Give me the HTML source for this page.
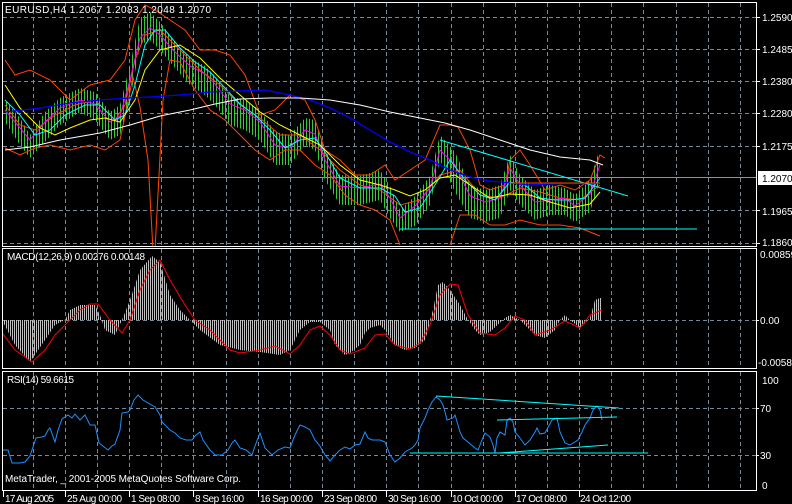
<!DOCTYPE html>
<html><head><meta charset="utf-8"><style>
html,body{margin:0;padding:0;background:#000;width:792px;height:504px;overflow:hidden}
svg{display:block}
text{font-family:"Liberation Sans",sans-serif;font-size:10px;fill:#fff}
</style></head><body>
<svg width="792" height="504" viewBox="0 0 792 504" xmlns="http://www.w3.org/2000/svg">
<defs>
<pattern id="vg" width="3" height="4" patternUnits="userSpaceOnUse"><rect x="0" y="0" width="1" height="4" fill="#32cd32"/></pattern>
<pattern id="vh" width="2" height="4" patternUnits="userSpaceOnUse"><rect x="0" y="0" width="1" height="4" fill="#c0c0c0"/></pattern>
<clipPath id="c1"><rect x="3" y="3" width="753" height="243"/></clipPath>
<clipPath id="c2"><rect x="3" y="249" width="753" height="119"/></clipPath>
<clipPath id="c3"><rect x="3" y="372" width="753" height="118"/></clipPath>
</defs>
<rect width="792" height="504" fill="#000"/>
<g stroke="#778899" stroke-width="1" stroke-dasharray="4,3">
<path d="M33.5 3V246M65.5 3V246M97.5 3V246M129.5 3V246M161.5 3V246M193.5 3V246M226.5 3V246M258.5 3V246M290.5 3V246M322.5 3V246M354.5 3V246M386.5 3V246M418.5 3V246M451.5 3V246M483.5 3V246M515.5 3V246M547.5 3V246M579.5 3V246M611.5 3V246M643.5 3V246M676.5 3V246M708.5 3V246M740.5 3V246"/>
<path d="M33.5 249V368M65.5 249V368M97.5 249V368M129.5 249V368M161.5 249V368M193.5 249V368M226.5 249V368M258.5 249V368M290.5 249V368M322.5 249V368M354.5 249V368M386.5 249V368M418.5 249V368M451.5 249V368M483.5 249V368M515.5 249V368M547.5 249V368M579.5 249V368M611.5 249V368M643.5 249V368M676.5 249V368M708.5 249V368M740.5 249V368"/>
<path d="M33.5 372V490M65.5 372V490M97.5 372V490M129.5 372V490M161.5 372V490M193.5 372V490M226.5 372V490M258.5 372V490M290.5 372V490M322.5 372V490M354.5 372V490M386.5 372V490M418.5 372V490M451.5 372V490M483.5 372V490M515.5 372V490M547.5 372V490M579.5 372V490M611.5 372V490M643.5 372V490M676.5 372V490M708.5 372V490M740.5 372V490"/>
<path d="M3 17.5H756M3 49.5H756M3 81.5H756M3 113.5H756M3 146.5H756M3 210.5H756M3 243.5H756"/>
<path d="M3 320.5H756M3 408.5H756M3 455.5H756"/>
</g>
<line x1="3" y1="177.5" x2="756" y2="177.5" stroke="#8a96a3"/>
<g clip-path="url(#c1)" fill="none" stroke-width="1">
<path fill="url(#vg)" stroke="none" d="M5 100L20 118L30 135L45 112L60 98L80 88L95 92L110 112L120 105L130 65L140 18L150 12L160 22L175 42L190 58L205 66L215 76L230 96L245 100L260 110L275 132L290 135L305 118L315 120L325 150L340 175L360 176L380 170L390 186L400 210L415 196L430 176L440 135L455 152L470 185L485 190L500 185L510 155L520 175L535 190L550 185L565 188L575 195L590 180L600 148L600 180L590 212L575 222L565 215L550 215L535 220L520 205L510 190L500 218L485 222L470 218L455 192L440 160L430 205L415 226L400 232L390 218L380 200L360 205L340 205L325 180L315 150L305 145L290 165L275 165L260 140L245 130L230 125L215 105L205 95L190 85L175 68L160 50L150 40L140 45L130 100L120 135L110 140L95 120L80 112L60 125L45 142L30 158L20 145L5 122Z"/>
<path stroke="#ff4500" d="M5 60L15 75L30 70L50 80L70 100L90 85L110 80L125 60L135 20L145 5L155 10L170 20L185 30L200 50L215 50L230 55L245 75L260 115L275 110L290 95L305 100L315 120L325 150L340 160L355 175L370 175L385 165L395 180L410 170L425 160L440 125L450 125L458 127L470 150L480 185L490 190L505 185L510 160L520 150L530 165L545 190L560 185L575 190L590 180L600 155L605 158"/>
<path stroke="#ff4500" d="M5 148L20 155L35 148L50 145L70 150L90 145L105 150L120 140L133 77L140 107L148 160L153 250M155 250L163 100L170 60L180 62L195 90L210 110L225 120L240 135L255 150L270 160L285 150L300 150L315 165L330 175L345 195L360 205L375 210L390 220L400 245M450 245L460 215L475 215L490 225L505 225L520 220L540 225L560 225L580 228L590 232L600 236"/>
<path stroke="#ff4500" d="M5 105L20 125L35 130L55 115L75 105L95 100L115 120L125 105L135 60L145 35L160 30L180 50L200 70L220 85L240 105L260 118L280 135L300 135L320 150L340 170L360 185L380 190L400 205L420 200L440 175L460 170L480 195L500 198L520 188L540 192L560 198L580 200L600 185"/>
<path stroke="#ff00ff" d="M5 110L20 128L30 140L45 122L60 108L80 100L95 104L110 122L120 116L130 80L140 38L150 28L160 35L175 52L190 66L205 74L215 84L230 104L245 110L260 122L275 145L290 148L305 130L315 134L325 160L340 186L360 188L380 184L390 198L400 218L415 206L430 188L440 150L455 165L470 196L485 202L500 198L510 168L520 185L535 202L550 200L565 198L575 206L590 194L600 165"/>
<path stroke="#00ffff" d="M5 100L20 115L35 135L50 130L65 115L85 105L100 105L115 120L125 115L135 85L145 45L155 30L165 30L180 48L195 62L210 72L225 88L240 104L255 115L270 130L285 148L300 140L315 138L325 152L340 178L360 188L380 188L395 196L405 212L420 208L435 185L450 160L465 180L480 195L495 200L510 182L525 185L540 198L555 200L570 200L585 198L600 178"/>
<path stroke="#ffff00" d="M5 85L20 108L40 128L55 135L70 128L90 120L105 118L120 122L135 100L145 70L160 50L180 45L200 58L220 78L240 95L260 112L280 125L300 135L320 145L340 165L360 180L380 185L395 190L410 196L425 190L440 178L455 175L470 185L490 198L510 194L530 195L550 202L570 208L590 204L600 192"/>
<path stroke="#0000ff" stroke-width="1.3" d="M5 112L40 108L70 103L100 100L130 98L150 97L180 95L210 92L240 91L265 90L290 95L310 100L330 108L350 118L370 130L390 142L410 152L430 160L450 170L470 177L490 181L510 183L530 185L550 184L570 183L590 184L600 183"/>
<path stroke="#ffffff" d="M5 150L30 147L60 140L100 133L130 125L160 116L190 110L215 104L240 99L270 98L300 98L330 100L360 105L390 112L420 118L445 123L470 130L500 140L530 150L560 157L590 160L603 165"/>
<path stroke="#00ffff" d="M440 140L628 196M400 229L697 229"/>
<path stroke="#ff4500" d="M510 183L600 183"/>
</g>
<rect x="2.5" y="2.5" width="754" height="244" fill="none" stroke="#fff"/>
<text x="5" y="13" textLength="206">EURUSD,H4  1.2067 1.2083 1.2048 1.2070</text>
<g>
<text x="762" y="21">1.2590</text><text x="762" y="53">1.2485</text><text x="762" y="85">1.2380</text><text x="762" y="117">1.2280</text><text x="762" y="150">1.2175</text><text x="762" y="215">1.1965</text><text x="762" y="246">1.1860</text>
<path d="M757 17.5h3M757 49.5h3M757 81.5h3M757 113.5h3M757 146.5h3M757 210.5h3M757 243.5h3" stroke="#fff"/>
<rect x="758" y="171" width="34" height="14" fill="#fff"/>
<text x="762" y="182" style="fill:#000">1.2070</text>
</g>
<g clip-path="url(#c2)">
<path fill="url(#vh)" d="M3 320L3 322L15 345L30 362L45 340L55 325L65 320L70 310L80 305L95 305L100 315L105 330L115 335L122 320L130 300L140 270L152 256L160 262L170 295L180 310L190 320L200 330L220 345L240 350L260 352L280 355L290 350L300 330L310 322L320 322L330 330L335 345L345 355L350 353L360 345L365 333L370 328L380 325L385 330L395 345L405 350L415 348L425 340L428 330L430 320L433 310L438 285L443 282L450 290L460 305L467 318L475 330L480 335L490 332L505 318L510 315L520 320L535 335L545 338L555 330L560 320L565 315L570 320L580 328L590 318L595 300L600 298L602 298L602 320Z"/>
<path fill="none" stroke="#ff0000" d="M3 334L15 350L32 362L45 350L55 335L65 325L80 310L90 304L98 304L110 320L122 333L130 320L140 290L150 270L160 260L170 280L185 305L195 320L210 330L230 350L240 353L260 350L275 346L290 354L300 345L310 330L320 326L330 335L340 350L350 354L365 348L375 335L385 334L395 345L410 349L420 343L430 325L440 295L450 284L458 285L468 315L480 333L495 335L505 328L515 316L525 320L535 335L550 330L565 321L580 328L590 315L602 310"/>
</g>
<rect x="2.5" y="248.5" width="754" height="120" fill="none" stroke="#fff"/>
<text x="7" y="260" textLength="138">MACD(12,26,9) 0.00276 0.00148</text>
<text x="760" y="258">0.00859</text><text x="760" y="324">0.00</text><text x="758" y="366">-0.00581</text>
<path d="M757 320.5h2" stroke="#fff"/>
<g clip-path="url(#c3)" fill="none">
<path stroke="#1e90ff" d="M3 450L8 450L12 463L20 463L25 462L30 456L36 438L42 437L45 436L48 430L50 428L55 442L58 430L62 419L68 415L72 418L75 414L80 420L85 415L90 425L95 425L99 443L108 450L112 446L115 444L120 430L122 413L128 412L130 410L134 400L138 395L143 400L148 403L155 407L160 415L162 422L166 426L170 430L175 433L180 438L186 440L192 440L195 436L200 432L203 440L205 443L210 450L215 455L222 455L228 450L232 443L235 440L240 448L246 450L252 455L255 446L260 433L265 448L270 453L272 455L278 450L285 447L290 448L295 435L300 425L305 427L310 430L315 440L320 446L325 455L330 461L335 455L340 450L345 447L350 449L355 445L360 444L365 432L368 438L372 440L380 440L385 442L390 455L395 462L400 458L405 452L412 448L415 445L418 440L420 428L425 418L428 410L432 402L436 397L440 400L443 405L445 412L447 420L453 418L455 415L458 425L460 432L463 438L468 442L475 448L478 450L482 440L485 433L490 437L493 445L495 453L497 438L500 432L505 435L507 420L510 418L513 422L515 432L520 438L525 445L530 440L535 432L537 428L540 434L545 433L552 420L557 418L560 432L565 443L570 445L578 440L582 432L585 425L590 418L593 410L597 406L600 410L602 420"/>
<path stroke="#00ffff" d="M436 396L619 408M497 420L617 417M499 453L608 445M410 453L648 453"/>
</g>
<rect x="2.5" y="371.5" width="754" height="119" fill="none" stroke="#fff"/>
<text x="7" y="383" textLength="67">RSI(14) 59.6615</text>
<text x="5" y="482" textLength="236">MetaTrader, _ 2001-2005 MetaQuotes Software Corp.</text>
<text x="762" y="384">100</text><text x="760" y="412">70</text><text x="760" y="459">30</text><text x="762" y="489">0</text>
<path d="M757 408.5h2M757 455.5h2" stroke="#fff"/>
<path d="M3.5 491v6M65.5 491v6M129.5 491v6M193.5 491v6M258.5 491v6M322.5 491v6M386.5 491v6M451.5 491v6M515.5 491v6M579.5 491v6" stroke="#fff"/>
<text x="5" y="502" textLength="49">17 Aug 2005</text><text x="67" y="502" textLength="55">25 Aug 00:00</text><text x="131" y="502" textLength="49">1 Sep 08:00</text><text x="195" y="502" textLength="49">8 Sep 16:00</text><text x="260" y="502" textLength="53">16 Sep 00:00</text><text x="324" y="502" textLength="53">23 Sep 08:00</text><text x="388" y="502" textLength="53">30 Sep 16:00</text><text x="452" y="502" textLength="51">10 Oct 00:00</text><text x="516" y="502" textLength="51">17 Oct 08:00</text><text x="580" y="502" textLength="51">24 Oct 12:00</text>
</svg>
</body></html>
